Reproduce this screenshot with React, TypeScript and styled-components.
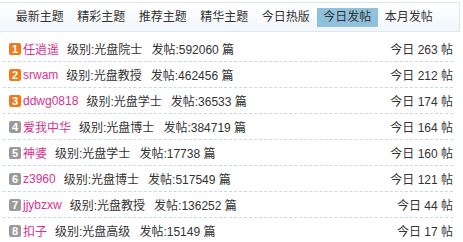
import styled, { createGlobalStyle } from 'styled-components';

const GlobalStyle = createGlobalStyle`
  body {
    margin: 0;
    background: #fff;
    font-family: "Liberation Sans", "Noto Sans CJK SC", sans-serif;
    font-size: 12px;
    color: #333;
  }
`;

const Panel = styled.div`
  width: 460px;
  padding-top: 2px;
`;

const TabBar = styled.div`
  display: flex;
  align-items: center;
  height: 28px;
  padding-left: 9px;
  border: 1px solid #dde8f0;
  border-left: none;
  background: linear-gradient(#ffffff, #f1f6fa);
`;

const Tab = styled.div<{ $active?: boolean }>`
  width: 61.5px;
  height: 19px;
  line-height: 19px;
  text-align: center;
  font-size: 12px;
  color: #333;
  background: ${(p) => (p.$active ? '#8fc1dc' : 'transparent')};
`;

const List = styled.ul`
  list-style: none;
  margin: 4px 0 0;
  padding: 0;
  width: 450px;
  margin-left: 3px;
`;

const Row = styled.li`
  display: flex;
  align-items: center;
  height: 25px;
  padding-left: 6px;
  border-bottom: 1px dashed #c6dbe5;

  &:last-child {
    border-bottom: none;
  }
`;

const Badge = styled.span<{ $top: boolean }>`
  display: inline-flex;
  align-items: center;
  justify-content: center;
  width: 12px;
  height: 12px;
  margin-right: 2px;
  border-radius: 2px;
  background: ${(p) => (p.$top ? '#f07a1a' : '#9a9a9a')};
  color: #fff;
  font-family: "Liberation Sans", sans-serif;
  font-weight: bold;
  font-size: 11px;
`;

const Name = styled.a`
  color: #d5338f;
  text-decoration: none;
  margin-right: 8px;
`;

const Info = styled.span`
  color: #333;
  margin-right: 9px;
`;

const Count = styled.span`
  margin-left: auto;
  color: #333;
`;

const tabs = ['最新主题', '精彩主题', '推荐主题', '精华主题', '今日热版', '今日发帖', '本月发帖'];

const users = [
  { name: '任逍遥', level: '光盘院士', posts: 592060, today: 263 },
  { name: 'srwam', level: '光盘教授', posts: 462456, today: 212 },
  { name: 'ddwg0818', level: '光盘学士', posts: 36533, today: 174 },
  { name: '爱我中华', level: '光盘博士', posts: 384719, today: 164 },
  { name: '神婆', level: '光盘学士', posts: 17738, today: 160 },
  { name: 'z3960', level: '光盘博士', posts: 517549, today: 121 },
  { name: 'jjybzxw', level: '光盘教授', posts: 136252, today: 44 },
  { name: '扣子', level: '光盘高级', posts: 15149, today: 17 },
];

export default function App() {
  return (
    <Panel>
      <GlobalStyle />
      <TabBar>
        {tabs.map((t) => (
          <Tab key={t} $active={t === '今日发帖'}>
            {t}
          </Tab>
        ))}
      </TabBar>
      <List>
        {users.map((u, i) => (
          <Row key={u.name}>
            <Badge $top={i < 3}>{i + 1}</Badge>
            <Name href="#">{u.name}</Name>
            <Info>级别:{u.level}</Info>
            <Info>发帖:{u.posts} 篇</Info>
            <Count>今日 {u.today} 帖</Count>
          </Row>
        ))}
      </List>
    </Panel>
  );
}
